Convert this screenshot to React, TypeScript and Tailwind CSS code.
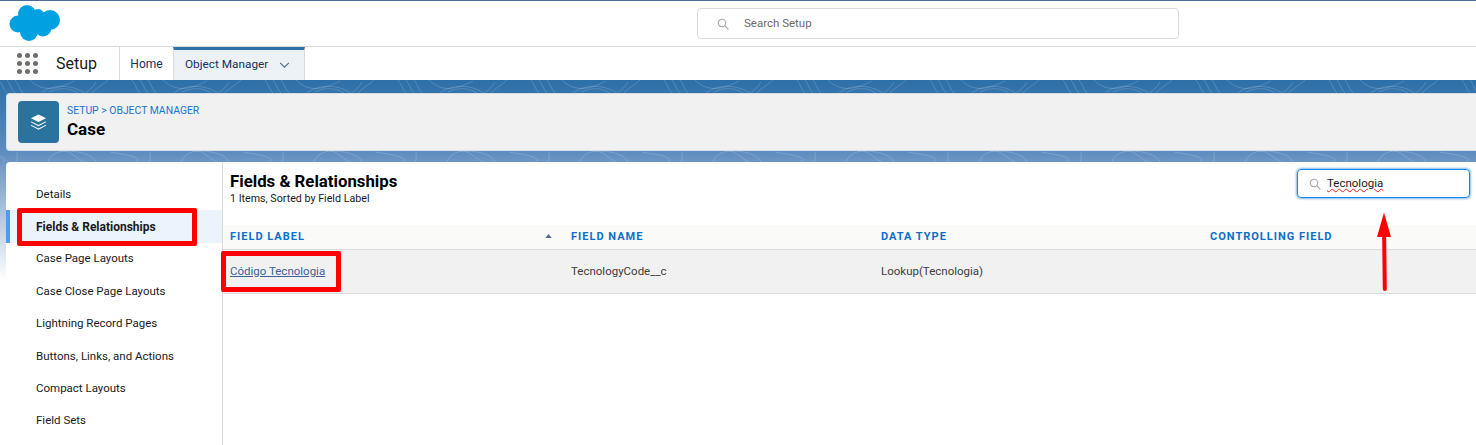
import React from "react";

const font = { fontFamily: 'Roboto, "Noto Sans", sans-serif' };

function Search({ className = "" }: { className?: string }) {
  return (
    <svg viewBox="0 0 14 14" className={className} fill="none" stroke="#a8a8a8" strokeWidth="1.3">
      <circle cx="5.8" cy="5.8" r="4.3" />
      <path d="M9 9l4 4" strokeLinecap="round" />
    </svg>
  );
}

function Cloud() {
  return (
    <svg viewBox="0 0 52 36" className="w-[52px] h-[36px]" fill="#00a1e0">
      <circle cx="9" cy="19" r="8.5" />
      <circle cx="18" cy="9" r="9" />
      <circle cx="29" cy="10.5" r="6.5" />
      <circle cx="41" cy="15" r="10" />
      <circle cx="20" cy="27" r="9" />
      <circle cx="34" cy="23" r="8.5" />
      <rect x="10" y="10" width="30" height="16" />
    </svg>
  );
}

function Pattern() {
  const items: React.ReactNode[] = [];
  for (let i = -1; i < 16; i++) {
    const x = i * 133 + 40;
    items.push(
      <g key={i}>
        <path d={`M${x} 14c12-11 36-10 48 2s-4 26-24 24`} />
        <path d={`M${x + 9} 12c10-5 24-5 32 4`} />
        <path d={`M${x + 56} 2c-6 10-10 8-16 18`} />
        <path d={`M${x + 68} 0c-5 5-12 8-16 13`} />
        <path d={`M${x + 92} 0c4 5 4 9 8 13`} />
        <path d={`M${x + 100} 0c4 5 4 9 8 13`} />
        <path d={`M${x + 108} 0c4 5 4 9 8 13`} />
        <path d={`M${x - 10} 0c14 14 30 8 44 1`} />
        <path d={`M${x + 20} 71c10-2 16 8 26 12`} />
        <path d={`M${x + 8} 82c2-6 8-11 18-11 10 0 26 2 30 11`} />
        <path d={`M${x + 70} 72c10 2 16 2 24 5 6 2 4 4 2 5`} />
        <path d={`M${x + 110} 72c0 3 1 7-1 10`} />
      </g>
    );
  }
  return (
    <svg className="absolute inset-0 w-full h-full" viewBox="0 0 1476 82" preserveAspectRatio="none" fill="none" stroke="#ffffff" strokeOpacity="0.17" strokeWidth="1">
      {items}
    </svg>
  );
}

const navItems = [
  "Details",
  "Fields & Relationships",
  "Case Page Layouts",
  "Case Close Page Layouts",
  "Lightning Record Pages",
  "Buttons, Links, and Actions",
  "Compact Layouts",
  "Field Sets",
];

export default function App() {
  return (
    <div className="relative w-[1476px] h-[445px] overflow-hidden bg-white text-[11.5px] text-[#1a1a1a]" style={font}>
      {/* global header */}
      <header className="h-[47px] flex items-start border-t border-b border-t-[#4a6c96] border-b-[#dddbda] bg-white">
        <div className="pl-[9px] pt-[4px] w-[697px] shrink-0"><Cloud /></div>
        <div className="mt-[7px] w-[482px] h-[31px] rounded border border-[#dddbda] flex items-center pl-[19px]">
          <Search className="w-[12px] h-[12px]" />
          <span className="ml-[15px] text-[#6b6b6b]">Search Setup</span>
        </div>
      </header>

      {/* app nav */}
      <nav className="h-[33px] flex items-stretch bg-white">
        <div className="w-[120px] flex items-center border-r border-[#dddbda] pl-[17px]">
          <div className="grid grid-cols-3 gap-x-[3px] gap-y-[3px]">
            {Array.from({ length: 9 }).map((_, i) => (
              <span key={i} className="w-[5px] h-[5px] rounded-full bg-[#706e6b]" />
            ))}
          </div>
          <span className="ml-[18px] text-[16px] text-[#1a1a1a]">Setup</span>
        </div>
        <div className="w-[53px] flex items-center justify-center text-[12px] text-[#16325c]">Home</div>
        <div className="w-[132px] flex items-center bg-[#ecf1f5] border-t-[3px] border-t-[#2d6fa6] border-r border-r-[#dddbda] border-l border-l-[#dddbda] pl-[11px] text-[11.8px] text-[#16325c]">
          <span>Object Manager</span>
          <svg viewBox="0 0 12 8" className="ml-[11px] w-[11px] h-[7px]" fill="none" stroke="#54698d" strokeWidth="1.3">
            <path d="M1 1l5 5 5-5" />
          </svg>
        </div>
      </nav>

      {/* content */}
      <div className="relative h-[365px] pl-[6px] bg-[linear-gradient(180deg,#2d6fa8_0%,#5f8dbf_20%,#7a9fc9_25%,#c6d6e8_42%,#ffffff_55%)]">
        <div className="absolute left-0 right-0 top-0 h-[82px]"><Pattern /></div>
        <div className="relative pt-[13px]">
          <div className="h-[58px] bg-[#f1f1f1] rounded-l border border-r-0 border-[#d8dde6] flex items-center pl-[11px]">
            <div className="w-[41px] h-[42px] rounded bg-[#2a739e] flex items-center justify-center">
              <svg viewBox="0 0 20 20" className="w-[19px] h-[19px]" fill="#ffffff">
                <path d="M10 1.5l8 4-8 4-8-4z" />
                <path d="M2.6 9l7.4 3.7L17.4 9l.9.5L10 14 1.7 9.5z" />
                <path d="M2.6 12.7l7.4 3.7 7.4-3.7.9.5-8.3 4.5-8.3-4.5z" />
              </svg>
            </div>
            <div className="ml-[8px] -mt-[1px]">
              <div className="text-[10.4px] leading-[14px] text-[#1b74d0] uppercase">Setup &gt; Object Manager</div>
              <div className="text-[17px] leading-[22px] font-bold text-black">Case</div>
            </div>
          </div>

          <div className="mt-[11px] h-[283px] bg-white rounded-tl flex">
            {/* sidebar */}
            <aside className="w-[217px] shrink-0 border-r border-[#dddbda] pt-[16px]">
              {navItems.map((n, i) => (
                <div
                  key={n}
                  className={
                    "h-[32.4px] flex items-center " +
                    (i === 1 ? "bg-[#ebf3fc] border-l-[4px] border-l-[#4b9cf5] pl-[26px] text-[12px] font-bold" : "pl-[30px]")
                  }
                >
                  {n}
                </div>
              ))}
            </aside>

            {/* main */}
            <main className="flex-1 min-w-0">
              <div className="h-[63px] relative pl-[7px] pt-[8px]">
                <div className="text-[16.8px] leading-[22px] font-bold text-black">Fields &amp; Relationships</div>
                <div className="text-[10.7px] leading-[13px]">1 Items, Sorted by Field Label</div>
                <div className="absolute left-[1074px] top-[7px] w-[173px] h-[29px] rounded border border-[#1589ee] shadow-[0_0_3px_#0070d2] flex items-center pl-[11px]">
                  <Search className="w-[12px] h-[12px]" />
                  <span className="ml-[6px] underline decoration-wavy decoration-[#e02020] decoration-1">Tecnologia</span>
                </div>
              </div>
              <div className="h-[25px] bg-[#fafaf9] border-b border-[#dddbda] grid grid-cols-[348px_310px_329px_1fr] items-center text-[11px] font-bold tracking-[1px] text-[#0a70c9] uppercase relative">
                <div className="pl-[7px]">Field Label</div>
                <div>Field Name</div>
                <div>Data Type</div>
                <div>Controlling Field</div>
                <svg viewBox="0 0 8 5" className="absolute left-[322px] top-[9px] w-[7px] h-[4px]" fill="#54698d"><path d="M4 0l4 5H0z" /></svg>
              </div>
              <div className="h-[44px] bg-[#f1f1f1] border-b border-[#dddbda] grid grid-cols-[348px_310px_329px_1fr] items-center text-[#3e3e3c]">
                <div className="pl-[7px] text-[#3f5f96] underline">Código Tecnologia</div>
                <div>TecnologyCode__c</div>
                <div>Lookup(Tecnologia)</div>
                <div></div>
              </div>
            </main>
          </div>
        </div>
      </div>

      {/* annotations */}
      <div className="absolute left-[17px] top-[208px] w-[180px] h-[38px] rounded-[2px] border-[5px] border-[#ff0000]" />
      <div className="absolute left-[221px] top-[251px] w-[120px] h-[41px] rounded-[2px] border-[5px] border-[#ff0000]" />
      <svg className="absolute left-[1374px] top-[210px] w-[20px] h-[84px]" viewBox="0 0 20 84">
        <path d="M10 14L10.8 79" stroke="#ff0000" strokeWidth="4" strokeLinecap="round" fill="none" />
        <path d="M10 2.5L17 27H3z" fill="#ff0000" />
      </svg>
    </div>
  );
}
